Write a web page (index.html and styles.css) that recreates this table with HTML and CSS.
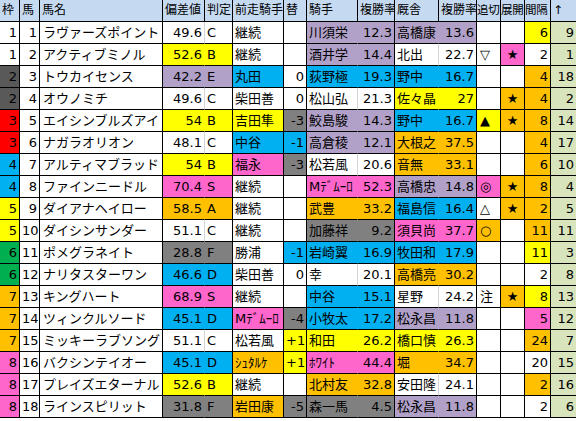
FILE: index.html
```html
<!DOCTYPE html>
<html lang="ja">
<head>
  <meta charset="UTF-8">
  <meta name="viewport" content="width=device-width, initial-scale=1.0">
  <title>出馬表</title>
  <link rel="stylesheet" href="styles.css">
</head>
<body>
  <div class="sheet" id="sheet">
    <div class="cell head">枠</div>
    <div class="cell head">馬</div>
    <div class="cell head">馬名</div>
    <div class="cell head">偏差値</div>
    <div class="cell head">判定</div>
    <div class="cell head">前走騎手</div>
    <div class="cell head">替</div>
    <div class="cell head">騎手</div>
    <div class="cell head">複勝率</div>
    <div class="cell head">厩舎</div>
    <div class="cell head">複勝率</div>
    <div class="cell head tight">追切</div>
    <div class="cell head tight">展開</div>
    <div class="cell head tight">間隔</div>
    <div class="cell head">↑</div>
  </div>

  <script>
    // 枠, 馬, 馬名, 偏差値, 判定, 色, 前走騎手, 色, 替, 色, 騎手, 複勝率, 色, 厩舎, 複勝率, 色, 追切, 色, 展開, 色, 間隔, 色, ↑
    const rows = [
      [1, 1, 'ラヴァーズポイント', '49.6', 'C', '', '継続', '', '', '', '川須栄', '12.3', 'pu', '高橋康', '13.6', 'pu', '', '', '', '', '6', 'y', '9'],
      [1, 2, 'アクティブミノル', '52.6', 'B', 'y', '継続', '', '', '', '酒井学', '14.4', 'pu', '北出', '22.7', '', '▽', '', '★', 'p', '2', '', '1'],
      [2, 3, 'トウカイセンス', '42.2', 'E', 'pu', '丸田', 'b', '0', '', '荻野極', '19.3', 'b', '野中', '16.7', 'b', '', '', '', '', '4', 'o', '18'],
      [2, 4, 'オウノミチ', '49.6', 'C', '', '柴田善', '', '0', '', '松山弘', '21.3', '', '佐々晶', '27', 'y', '', '', '★', 'o', '4', 'o', '2'],
      [3, 5, 'エイシンブルズアイ', '54', 'B', 'y', '吉田隼', 'y', '-3', 'g', '鮫島駿', '14.3', 'pu', '野中', '16.7', 'b', '▲', 'y', '★', 'o', '8', 'o', '14'],
      [3, 6, 'ナガラオリオン', '48.1', 'C', '', '中谷', 'b', '-1', 'b', '高倉稜', '12.1', 'pu', '大根之', '37.5', 'o', '', '', '', '', '4', 'o', '17'],
      [4, 7, 'アルティマブラッド', '54', 'B', 'y', '福永', 'p', '-3', 'g', '松若風', '20.6', '', '音無', '33.1', 'o', '', '', '', '', '6', 'o', '10'],
      [4, 8, 'ファインニードル', '70.4', 'S', 'p', '継続', '', '', '', 'Mﾃﾞﾑｰﾛ', '52.3', 'p', '高橋忠', '14.8', 'pu', '◎', 'p', '★', 'o', '8', 'o', '4'],
      [5, 9, 'ダイアナヘイロー', '58.5', 'A', 'o', '継続', '', '', '', '武豊', '33.2', 'o', '福島信', '16.4', 'b', '△', '', '★', 'o', '2', 'o', '5'],
      [5, 10, 'ダイシンサンダー', '51.1', 'C', '', '継続', '', '', '', '加藤祥', '9.2', 'g', '須貝尚', '37.7', 'p', '○', 'o', '', '', '11', 'o', '11'],
      [6, 11, 'ポメグラネイト', '28.8', 'F', 'g', '勝浦', '', '-1', 'b', '岩崎翼', '16.9', 'b', '牧田和', '17.9', 'b', '', '', '', '', '11', 'y', '3'],
      [6, 12, 'ナリタスターワン', '46.6', 'D', 'b', '柴田善', '', '0', '', '幸', '20.1', '', '高橋亮', '30.2', 'o', '', '', '', '', '2', '', '8'],
      [7, 13, 'キングハート', '68.9', 'S', 'p', '継続', '', '', '', '中谷', '15.1', 'b', '星野', '24.2', '', '注', '', '★', 'o', '8', 'y', '13'],
      [7, 14, 'ツィンクルソード', '45.1', 'D', 'b', 'Mﾃﾞﾑｰﾛ', 'p', '-4', 'g', '小牧太', '17.2', 'b', '松永昌', '11.8', 'pu', '', '', '', '', '5', 'p', '12'],
      [7, 15, 'ミッキーラブソング', '51.1', 'C', '', '松若風', '', '+1', 'y', '和田', '26.2', 'y', '橋口慎', '26.3', 'y', '', '', '', '', '24', 'o', '7'],
      [8, 16, 'バクシンテイオー', '45.1', 'D', 'b', 'ｼｭﾀﾙｹ', 'o', '+1', 'y', 'ﾎﾜｲﾄ', '44.4', 'p', '堀', '34.7', 'o', '', '', '', '', '20', '', '15'],
      [8, 17, 'プレイズエターナル', '52.6', 'B', 'y', '継続', '', '', '', '北村友', '32.8', 'o', '安田隆', '24.1', '', '', '', '', '', '2', 'o', '16'],
      [8, 18, 'ラインスピリット', '31.8', 'F', 'g', '岩田康', 'o', '-5', 'g', '森一馬', '4.5', 'g', '松永昌', '11.8', 'pu', '', '', '', '', '2', '', '6']
    ];

    const sheet = document.getElementById('sheet');

    function fill(c) {
      return c ? c : 'plain';
    }

    function cell(text, cls) {
      const div = document.createElement('div');
      div.className = 'cell ' + cls;
      div.textContent = text;
      sheet.appendChild(div);
    }

    rows.forEach(r => {
      cell(r[0], 'num waku-' + r[0]);
      cell(r[1], 'num');
      cell(r[2], 'name');
      cell(r[3], 'num pair ' + fill(r[5]));
      cell(r[4], fill(r[5]));
      cell(r[6], fill(r[7]));
      cell(r[8], 'num ' + fill(r[9]));
      cell(r[10], 'pair ' + fill(r[12]));
      cell(r[11], 'num ' + fill(r[12]));
      cell(r[13], 'pair ' + fill(r[15]));
      cell(r[14], 'num ' + fill(r[15]));
      cell(r[16], 'mark ' + fill(r[17]));
      cell(r[18], 'center ' + fill(r[19]));
      cell(r[20], 'num ' + fill(r[21]));
      cell(r[22], 'num up');
    });
  </script>
</body>
</html>
```

FILE: styles.css
```css
:root {
  --yellow: #ffff00;
  --orange: #ffc000;
  --pink: #ff66cc;
  --purple: #b1a0c7;
  --blue: #00b0f0;
  --grey: #808080;
  --head-bg: #c5d9f1;
  --up-bg: #d8e4bc;
}
body {
  margin: 0;
  background-color: #fff;
  font-family: 'DejaVu Sans', 'Noto Sans CJK JP', sans-serif;
  font-size: 13px;
  color: #000;
}
.sheet {
  display: grid;
  grid-template-columns: 20px 20px 123px 42px 28px 51px 23px 51px 37px 44px 38px 24px 24px 26px 26px;
  grid-auto-rows: 22px;
  width: 577px;
}
.cell {
  box-sizing: border-box;
  border-right: 1px solid #000;
  border-bottom: 1px solid #000;
  padding: 0 2px;
  line-height: 21px;
  white-space: nowrap;
  overflow: hidden;
}
.head {
  background-color: var(--head-bg);
  font-size: 12px;
  padding: 0 0 0 2px;
}
.head.tight {
  font-size: 11.5px;
  padding-left: 0;
  letter-spacing: -0.3px;
}
.num {
  text-align: right;
}
.center {
  text-align: center;
}
.name {
  padding-left: 3px;
}
.mark {
  padding-left: 3px;
}
.pair {
  border-right-color: transparent;
}
.pair.plain {
  border-right-color: #d4d4d4;
}
.y { background-color: var(--yellow); }
.o { background-color: var(--orange); }
.p { background-color: var(--pink); }
.pu { background-color: var(--purple); }
.b { background-color: var(--blue); }
.g { background-color: var(--grey); }
.up { background-color: var(--up-bg); }
.waku-1 { background-color: #fff; }
.waku-2 { background-color: #595959; }
.waku-3 { background-color: #ff0000; }
.waku-4 { background-color: var(--blue); }
.waku-5 { background-color: var(--yellow); }
.waku-6 { background-color: #00b050; }
.waku-7 { background-color: var(--orange); }
.waku-8 { background-color: var(--pink); }
```
